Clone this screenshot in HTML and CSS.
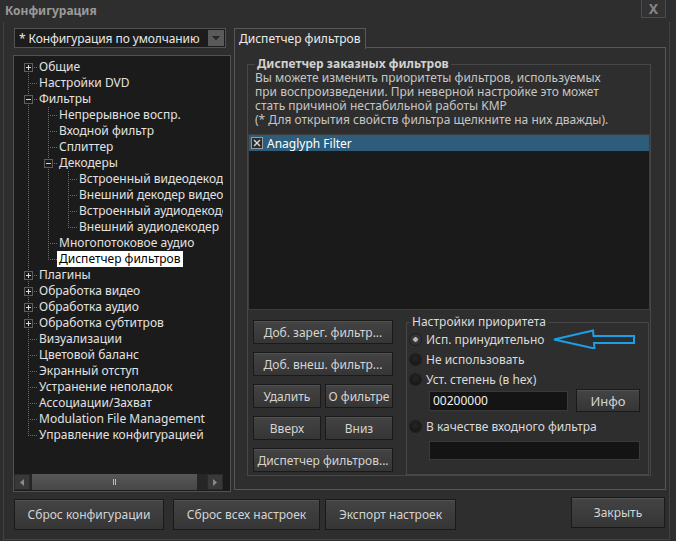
FILE: index.html
```html
<!DOCTYPE html>
<html lang="ru">
<head>
<meta charset="utf-8">
<title>Конфигурация</title>
<link rel="stylesheet" href="styles.css">
</head>
<body>
<div class="window">
  <div class="titlebar">
    <span class="title">Конфигурация</span>
    <span class="close">X</span>
  </div>
  <div class="frame">
    <div class="main">
      <div class="left">
        <div class="combo">
          <span class="combo-text">* Конфигурация по умолчанию</span>
          <span class="combo-btn"><svg width="8" height="5" viewBox="0 0 8 5"><path d="M0 0 H8 L4 4.5 Z" fill="#262626"/></svg></span>
        </div>
        <div class="tree">
          <div class="tree-list">
            <div class="row"><span class="g f"><i class="exp plus"></i></span><span class="label">Общие</span></div>
            <div class="row"><span class="g t"></span><span class="label">Настройки DVD</span></div>
            <div class="row"><span class="g t"><i class="exp"></i></span><span class="label">Фильтры</span></div>
            <div class="row"><span class="g v"></span><span class="g t"></span><span class="label">Непрерывное воспр.</span></div>
            <div class="row"><span class="g v"></span><span class="g t"></span><span class="label">Входной фильтр</span></div>
            <div class="row"><span class="g v"></span><span class="g t"></span><span class="label">Сплиттер</span></div>
            <div class="row"><span class="g v"></span><span class="g t"><i class="exp"></i></span><span class="label">Декодеры</span></div>
            <div class="row"><span class="g v"></span><span class="g v"></span><span class="g t"></span><span class="label">Встроенный видеодекодер</span></div>
            <div class="row"><span class="g v"></span><span class="g v"></span><span class="g t"></span><span class="label">Внешний декодер видео</span></div>
            <div class="row"><span class="g v"></span><span class="g v"></span><span class="g t"></span><span class="label">Встроенный аудиодекодер</span></div>
            <div class="row"><span class="g v"></span><span class="g v"></span><span class="g l"></span><span class="label">Внешний аудиодекодер</span></div>
            <div class="row"><span class="g v"></span><span class="g t"></span><span class="label">Многопотоковое аудио</span></div>
            <div class="row"><span class="g v"></span><span class="g l"></span><span class="label selected">Диспетчер фильтров</span></div>
            <div class="row"><span class="g t"><i class="exp plus"></i></span><span class="label">Плагины</span></div>
            <div class="row"><span class="g t"><i class="exp plus"></i></span><span class="label">Обработка видео</span></div>
            <div class="row"><span class="g t"><i class="exp plus"></i></span><span class="label">Обработка аудио</span></div>
            <div class="row"><span class="g t"><i class="exp plus"></i></span><span class="label">Обработка субтитров</span></div>
            <div class="row"><span class="g t"></span><span class="label">Визуализации</span></div>
            <div class="row"><span class="g t"></span><span class="label">Цветовой баланс</span></div>
            <div class="row"><span class="g t"></span><span class="label">Экранный отступ</span></div>
            <div class="row"><span class="g t"></span><span class="label">Устранение неполадок</span></div>
            <div class="row"><span class="g t"></span><span class="label">Ассоциации/Захват</span></div>
            <div class="row"><span class="g t"></span><span class="label">Modulation File Management</span></div>
            <div class="row"><span class="g l"></span><span class="label">Управление конфигурацией</span></div>
          </div>
          <div class="hscroll">
            <span class="sb-arrow"><svg width="4" height="7" viewBox="0 0 4 7"><path d="M4 0 V7 L0 3.5 Z" fill="#8a8a8a"/></svg></span>
            <span class="sb-thumb"><span class="grip"></span></span>
            <span class="sb-track"></span>
            <span class="sb-arrow"><svg width="4" height="7" viewBox="0 0 4 7"><path d="M0 0 V7 L4 3.5 Z" fill="#8a8a8a"/></svg></span>
          </div>
        </div>
      </div>
      <div class="right">
        <div class="tabs"><div class="tab">Диспетчер фильтров</div></div>
        <div class="page">
          <fieldset class="group main-group">
            <legend>Диспетчер заказных фильтров</legend>
            <p class="desc">Вы можете изменить приоритеты фильтров, используемых<br>при воспроизведении. При неверной настройке это может<br>стать причиной нестабильной работы KMP<br>(* Для открытия свойств фильтра щелкните на них дважды).</p>
            <div class="filter-list">
              <div class="filter-item">
                <span class="chk"><svg width="8" height="8" viewBox="0 0 8 8"><path d="M1 1 L7 7 M7 1 L1 7" stroke="#d8d8d8" stroke-width="1.4"/></svg></span>
                <span>Anaglyph Filter</span>
              </div>
            </div>
            <div class="lower">
              <div class="btn-grid">
                <span class="btn wide">Доб. зарег. фильтр...</span>
                <span class="btn wide">Доб. внеш. фильтр...</span>
                <span class="btn">Удалить</span>
                <span class="btn">О фильтре</span>
                <span class="btn">Вверх</span>
                <span class="btn">Вниз</span>
                <span class="btn wide">Диспетчер фильтров...</span>
              </div>
              <fieldset class="group prio">
                <legend>Настройки приоритета</legend>
                <div class="radio-row"><span class="radio on"></span><span>Исп. принудительно</span>
                  <svg class="arrow" width="84" height="20" viewBox="0 0 84 20"><path d="M2 10.5 L41 1.5 L41.5 7 L82 7 L82 14 L42 14 L42.5 19.5 Z" fill="none" stroke="#1b9fe6" stroke-width="2"/></svg>
                </div>
                <div class="radio-row"><span class="radio"></span><span>Не использовать</span></div>
                <div class="radio-row"><span class="radio"></span><span>Уст. степень (в hex)</span></div>
                <div class="input-row"><span class="field">00200000</span><span class="btn info">Инфо</span></div>
                <div class="radio-row r4"><span class="radio"></span><span>В качестве входного фильтра</span></div>
                <div class="field empty"></div>
              </fieldset>
            </div>
          </fieldset>
        </div>
      </div>
    </div>
    <div class="footer">
      <span class="btn fbtn b1">Сброс конфигурации</span>
      <span class="btn fbtn b2">Сброс всех настроек</span>
      <span class="btn fbtn b3">Экспорт настроек</span>
      <span class="btn fbtn close-btn">Закрыть</span>
    </div>
  </div>
</div>
</body>
</html>
```

FILE: styles.css
```css
* { box-sizing: border-box; }
html, body { margin: 0; padding: 0; }
body {
  width: 676px;
  height: 541px;
  overflow: hidden;
  background: #2e2e2e;
  font-family: "Noto Sans", "Open Sans", sans-serif;
  font-size: 12px;
  color: #d6d6d6;
}
.window {
  width: 676px;
  height: 541px;
  display: flex;
  flex-direction: column;
  padding: 0 6px 1px 3px;
}
.titlebar {
  height: 22px;
  display: flex;
  align-items: flex-start;
}
.title {
  font-weight: bold;
  color: #9a9a9a;
  line-height: 22px;
  padding-left: 2px;
}
.close {
  margin-left: auto;
  margin-right: 4px;
  width: 25px;
  height: 18px;
  border: 1px solid #4c4c4c;
  border-top: none;
  background: #323232;
  color: #858585;
  font-weight: bold;
  font-size: 14px;
  display: flex;
  align-items: center;
  justify-content: center;
  line-height: 1;
}
.frame {
  flex: 1;
  border: 1px solid #424242;
  border-top: none;
  display: flex;
  flex-direction: column;
}
.main {
  height: 470px;
  display: flex;
  padding: 6px 3px 0 9px;
}
.left {
  width: 218px;
  display: flex;
  flex-direction: column;
  gap: 7px;
}
.combo {
  height: 20px;
  width: 212px;
  margin-left: 1px;
  border: 1px solid #545454;
  background: #1c1c1c;
  display: flex;
  align-items: center;
  padding-left: 4px;
  color: #e8e8e8;
}
.combo-text { flex: 1; white-space: nowrap; letter-spacing: -0.1px; }
.combo-btn {
  width: 16px;
  height: 16px;
  margin-right: 1px;
  background: #5a5a5a;
  display: flex;
  align-items: center;
  justify-content: center;
}
.tree {
  flex: 1;
  border: 1px solid #525252;
  background: #1b1b1b;
  display: flex;
  flex-direction: column;
  overflow: hidden;
}
.tree-list {
  flex: 1;
  padding: 3px 0 0 3px;
  margin-right: 7px;
  overflow: hidden;
}
.row {
  height: 16px;
  display: flex;
  white-space: nowrap;
}
.g {
  flex: none;
  width: 20px;
  height: 16px;
  display: flex;
  align-items: center;
  --dotv: repeating-linear-gradient(to bottom, #6c6c6c 0 1px, transparent 1px 2px);
  --doth: repeating-linear-gradient(to right, #6c6c6c 0 1px, transparent 1px 2px);
}
.g.v { background: var(--dotv) 11px 0 / 1px 16px no-repeat; }
.g.t { background: var(--doth) 11px 8px / 9px 1px no-repeat, var(--dotv) 11px 0 / 1px 16px no-repeat; }
.g.l { background: var(--doth) 11px 8px / 9px 1px no-repeat, var(--dotv) 11px 0 / 1px 9px no-repeat; }
.g.f { background: var(--doth) 11px 8px / 9px 1px no-repeat, var(--dotv) 11px 8px / 1px 8px no-repeat; }
.exp {
  display: block;
  width: 9px;
  height: 9px;
  margin-left: 7px;
  border: 1px solid #5e5e5e;
  background: linear-gradient(#dcdcdc, #dcdcdc) center / 5px 1px no-repeat, #1b1b1b;
}
.exp.plus {
  background: linear-gradient(#dcdcdc, #dcdcdc) center / 5px 1px no-repeat,
              linear-gradient(#dcdcdc, #dcdcdc) center / 1px 5px no-repeat, #1b1b1b;
}
.label {
  line-height: 16px;
  padding: 0 2px;
  color: #e2e2e2;
}
.label.selected {
  background: #ffffff;
  color: #000000;
}
.hscroll {
  height: 16px;
  margin: 0 7px 1px 0;
  display: flex;
  background: #262626;
}
.sb-arrow {
  width: 16px;
  background: #393939;
  border: 1px solid #2a2a2a;
  display: flex;
  align-items: center;
  justify-content: center;
}
.sb-thumb {
  width: 165px;
  margin-left: 2px;
  background: linear-gradient(#575757, #474747);
  display: flex;
  align-items: center;
  justify-content: center;
}
.grip {
  width: 3px;
  height: 6px;
  border-left: 1px solid #bdbdbd;
  border-right: 1px solid #bdbdbd;
}
.sb-track { flex: 1; }
.right {
  margin-left: 3px;
  flex: 1;
  display: flex;
  flex-direction: column;
}
.tabs {
  height: 20px;
  display: flex;
  margin-bottom: -1px;
  position: relative;
  z-index: 1;
}
.tab {
  width: 132px;
  height: 21px;
  border: 1px solid #575757;
  border-bottom: none;
  background: #2e2e2e;
  color: #ececec;
  padding-left: 4px;
  line-height: 19px;
}
.page {
  height: 443px;
  border: 1px solid #575757;
  padding: 9px 14px 0 12px;
}
.group {
  margin: 0;
  padding: 0;
  min-width: 0;
  border: 1px solid #474747;
}
.main-group > legend {
  font-weight: bold;
  color: #d2d2d2;
  line-height: 14px;
  padding: 0 2px;
  margin-left: 7px;
}
.desc {
  margin: 0 0 0 7px;
  line-height: 14px;
  color: #c6c6c6;
  white-space: nowrap;
}
.filter-list {
  margin-top: 7px;
  height: 176px;
  background: #1a1a1a;
  border: 1px solid #3d3d3d;
}
.filter-item {
  height: 16px;
  background: #2d5d7b;
  display: flex;
  align-items: center;
  gap: 4px;
  color: #ffffff;
  padding-left: 2px;
  white-space: nowrap;
}
.chk {
  width: 12px;
  height: 12px;
  border: 1px solid #9a9a9a;
  background: #2b2b2b;
  display: flex;
  align-items: center;
  justify-content: center;
}
.lower {
  display: flex;
  align-items: flex-start;
  margin-top: 5px;
}
.btn-grid {
  margin: 5px 0 0 5px;
  width: 140px;
  display: grid;
  grid-template-columns: 1fr 1fr;
  grid-auto-rows: 24px;
  gap: 8px 4px;
}
.btn {
  background: linear-gradient(#444444, #353535);
  border: 1px solid #1a1a1a;
  box-shadow: inset 0 1px 0 #525252;
  color: #d4d4d4;
  display: flex;
  align-items: center;
  justify-content: center;
  white-space: nowrap;
}
.btn.wide { grid-column: span 2; }
.prio {
  flex: 1;
  margin: 0 1px 0 13px;
  padding: 0 0 14px 3px;
}
.prio > legend {
  line-height: 14px;
  padding: 0 2px;
  color: #dcdcdc;
}
.radio-row {
  height: 20px;
  display: flex;
  align-items: center;
  gap: 5px;
  color: #dadada;
  white-space: nowrap;
}
.radio {
  width: 11px;
  height: 11px;
  border-radius: 50%;
  background: radial-gradient(circle at 50% 40%, #262626, #111111);
  box-shadow: 0 0 0 1px #1f1f1f;
}
.radio.on {
  background: radial-gradient(circle, #b8b8b8 0 2px, #3a3a3a 2.5px, #2a2a2a);
}
.arrow {
  margin-left: auto;
  margin-right: 12px;
}
.input-row {
  height: 23px;
  margin-left: 19px;
  display: flex;
  align-items: center;
  gap: 8px;
}
.field {
  width: 139px;
  height: 20px;
  background: #141414;
  border: 1px solid #3a3a3a;
  color: #f0f0f0;
  padding-left: 3px;
  line-height: 18px;
}
.btn.info {
  width: 64px;
  height: 23px;
  font-size: 13px;
}
.radio-row.r4 { margin-top: 4px; }
.field.empty {
  width: 211px;
  height: 19px;
  margin: 5px 0 0 19px;
}
.footer {
  flex: 1;
  display: flex;
  align-items: flex-start;
  padding: 7px 4px 0 10px;
}
.fbtn {
  height: 31px;
  font-size: 12px;
}
.b1 { width: 150px; }
.b2 { width: 147px; margin-left: 9px; }
.b3 { width: 131px; margin-left: 5px; }
.close-btn {
  width: 94px;
  margin-left: auto;
  margin-top: -2px;
}
```
